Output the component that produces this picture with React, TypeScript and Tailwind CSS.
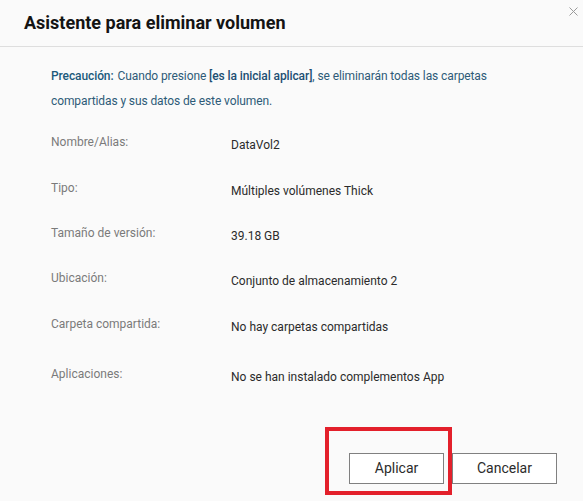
import React from 'react';

const rows = [
  { label: 'Nombre/Alias:', value: 'DataVol2', h: 'h-[46px]' },
  { label: 'Tipo:', value: 'Múltiples volúmenes Thick', h: 'h-[45px]' },
  { label: 'Tamaño de versión:', value: '39.18 GB', h: 'h-[45px]' },
  { label: 'Ubicación:', value: 'Conjunto de almacenamiento 2', h: 'h-[46px]' },
  { label: 'Carpeta compartida:', value: 'No hay carpetas compartidas', h: 'h-[50px]' },
  { label: 'Aplicaciones:', value: 'No se han instalado complementos App', h: 'h-[45px]' },
];

export default function App() {
  return (
    <div className="w-[583px] h-[501px] bg-[#fafafa] flex flex-col overflow-hidden font-['Roboto',sans-serif]">
      {/* Header */}
      <div className="h-[47px] shrink-0 border-b border-[#dedede] flex items-start justify-between pl-[24px] pr-[5px]">
        <h1 className="mt-[9px] text-[18px] leading-[28px] font-bold text-[#141414]">Asistente para eliminar volumen</h1>
        <button className="mt-[7px] w-[9px] h-[9px] text-[#9a9a9a]">
          <svg viewBox="0 0 9 9" className="w-[9px] h-[9px]" stroke="currentColor" strokeWidth={1}>
            <path d="M0.5 0.5l8 8M8.5 0.5l-8 8" />
          </svg>
        </button>
      </div>

      {/* Body */}
      <div className="flex-1 pl-[51px] pr-[30px] pt-[17px]">
        <p className="text-[12px] leading-[25px] text-[#2e5b78] tracking-[-0.1px]">
          <span className="text-[#1c5a7c] font-medium">Precaución:</span>
          <span className="ml-[4px]">Cuando presione </span>
          <span className="text-[#1d4f73] font-medium">[es la inicial aplicar]</span>
          <span>, se eliminarán todas las carpetas compartidas y sus datos de este volumen.</span>
        </p>

        <div className="mt-[18px] flex flex-col">
          {rows.map((r) => (
            <div key={r.label} className={`${r.h} flex items-start text-[12px] leading-[20px]`}>
              <div className="w-[180px] text-[#7a7a7a]">{r.label}</div>
              <div className="pt-[3px] text-[#2b2b2b]">{r.value}</div>
            </div>
          ))}
        </div>
      </div>

      {/* Footer */}
      <div className="h-[48px] shrink-0 flex items-start justify-end gap-[8px] pr-[26px]">
        <div className="relative">
          <button className="w-[95px] h-[31px] border border-[#808080] bg-white text-[14px] text-[#2b2b2b]">Aplicar</button>
          <div className="absolute left-[-24px] top-[-26px] w-[127px] h-[68px] border-[4px] border-[#e3202b]"></div>
        </div>
        <button className="w-[105px] h-[31px] border border-[#808080] bg-white text-[14px] text-[#2b2b2b]">Cancelar</button>
      </div>
    </div>
  );
}
